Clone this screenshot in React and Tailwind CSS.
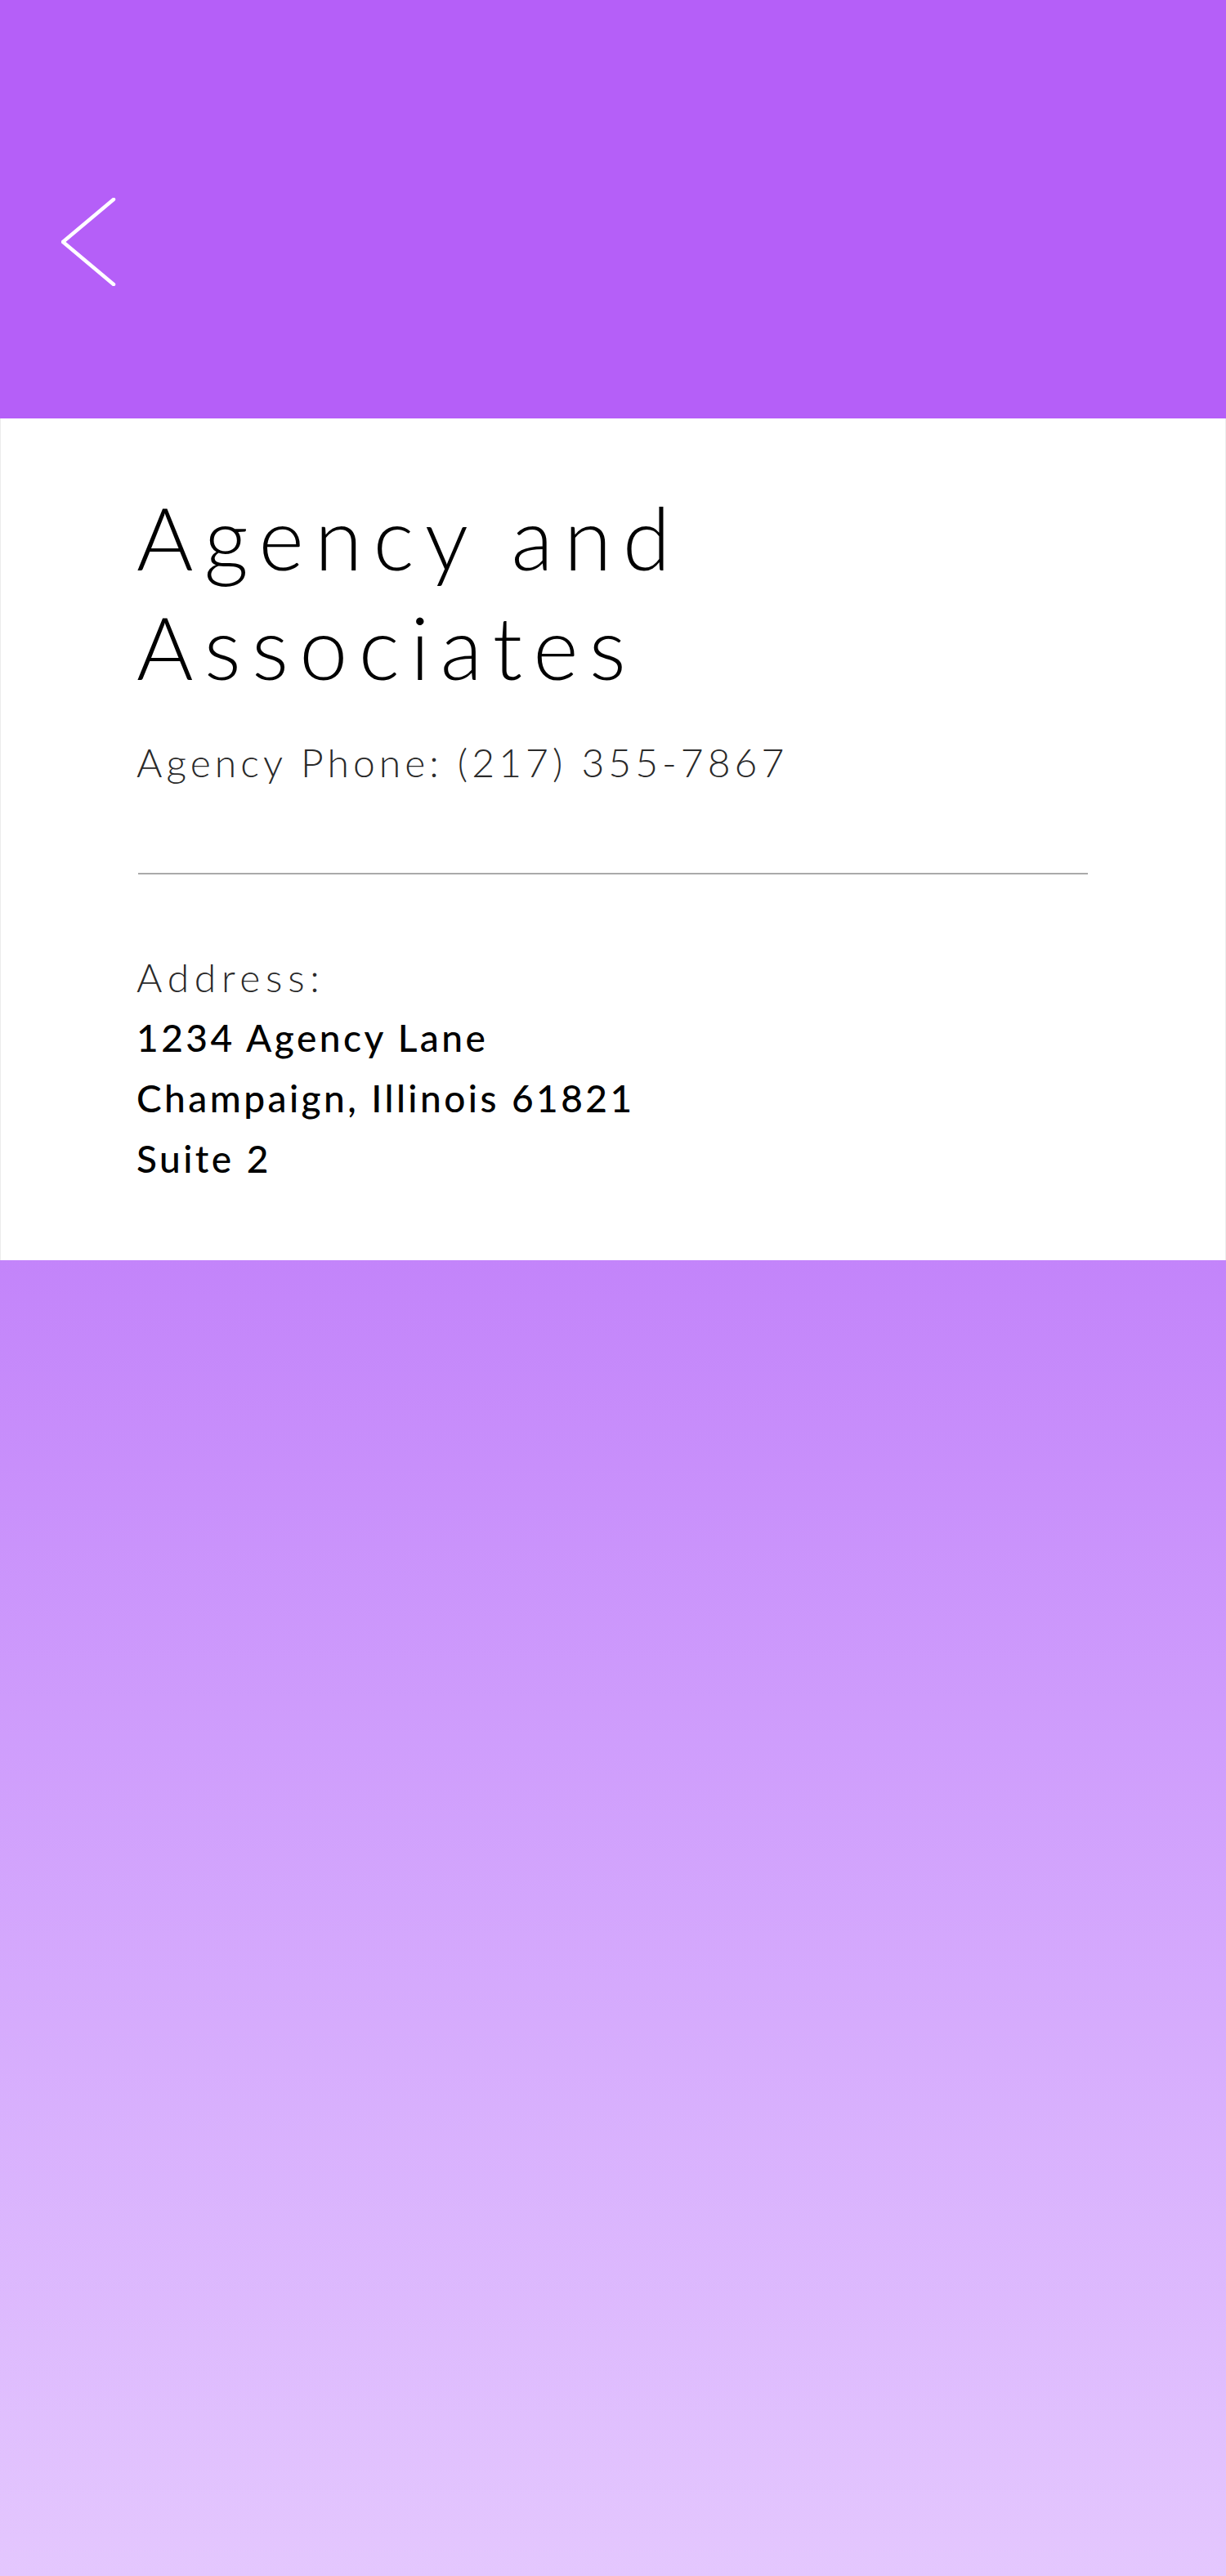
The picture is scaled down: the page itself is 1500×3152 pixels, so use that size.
import { useState } from "react";

const agency = {
  name: "Agency and Associates",
  phone: "(217) 355-7867",
  address: ["1234 Agency Lane", "Champaign, Illinois 61821", "Suite 2"],
};

export default function App() {
  const [pressed, setPressed] = useState(false);

  return (
    <div className="min-h-[3152px] w-full flex flex-col font-['Lato','Liberation_Sans',sans-serif]">

      {/* Header */}
      <div className="h-[512px] bg-[#b55ff8] pl-[75px] pt-[242px]">
        <button
          onClick={() => setPressed(!pressed)}
          className="w-[68px] h-[108px] flex items-center justify-start"
          aria-label="Back"
        >
          <svg width="68" height="108" viewBox="0 0 68 108" fill="none">
            <path
              d="M64 2 L2 54 L64 106"
              stroke="#ffffff"
              strokeWidth="4.5"
              strokeLinecap="round"
              strokeLinejoin="miter"
            />
          </svg>
        </button>
      </div>

      {/* Details */}
      <div className="bg-white pl-[166px] pr-[168px] pt-[78px] pb-[87px] border-x border-[#ececec]">

        <h1 className="text-[106px] leading-[134px] font-light tracking-[0.125em] text-black">
          Agency and
          <br />
          Associates
        </h1>

        <p className="mt-[45px] text-[48px] leading-[60px] font-light tracking-[0.105em] text-[#2a2a2a]">
          Agency Phone: {agency.phone}
        </p>

        <div className="mt-[105px] ml-[2px] h-[2px] bg-[#aaaaaa]" />

        <div className="mt-[89px]">
          <p className="text-[48px] leading-[74px] font-light tracking-[0.14em] text-[#2a2a2a]">
            Address:
          </p>
          {agency.address.map((line) => (
            <p key={line} className="text-[46px] leading-[74px] font-medium tracking-[0.075em] text-black">
              {line}
            </p>
          ))}
        </div>

      </div>

      {/* Bottom gradient */}
      <div className="flex-1 bg-linear-to-b from-[#c384fa] to-[#e4c7fe]" />

    </div>
  );
}
